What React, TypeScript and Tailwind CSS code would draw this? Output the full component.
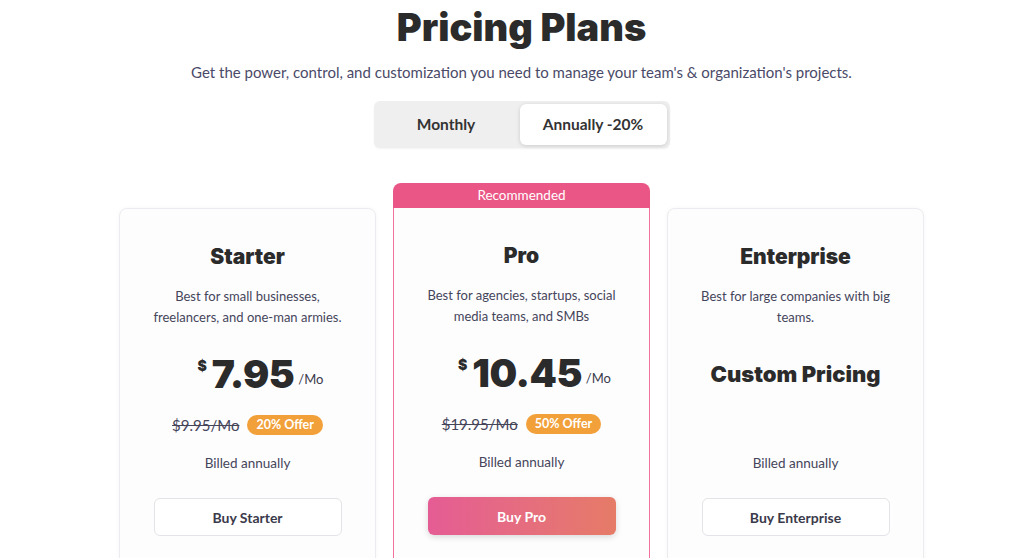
import { useState } from "react";

type Plan = {
  name: string;
  desc: string;
  price?: string;
  oldPrice?: string;
  offer?: string;
  cta: string;
  featured?: boolean;
};

const plans: Plan[] = [
  {
    name: "Starter",
    desc: "Best for small businesses, freelancers, and one-man armies.",
    price: "7.95",
    oldPrice: "$9.95/Mo",
    offer: "20% Offer",
    cta: "Buy Starter",
  },
  {
    name: "Pro",
    desc: "Best for agencies, startups, social media teams, and SMBs",
    price: "10.45",
    oldPrice: "$19.95/Mo",
    offer: "50% Offer",
    cta: "Buy Pro",
    featured: true,
  },
  {
    name: "Enterprise",
    desc: "Best for large companies with big teams.",
    cta: "Buy Enterprise",
  },
];

const heading = "font-['Inter',sans-serif] font-black text-[#2b2b2b]";

const featuredBody = "border-x border-b border-[#f2719f]";
const plainBody = "border border-[#ececf0] rounded-t-lg shadow-[0_0_4px_rgba(0,0,0,0.04)]";

const PlanCard = ({ plan }: { plan: Plan }) => (
  <div className="w-[257px] flex flex-col">
    {plan.featured ? (
      <div className="h-[25px] rounded-t-lg bg-[#ea5685] text-white text-[13.5px] flex items-center justify-center">
        Recommended
      </div>
    ) : (
      <div className="h-[25px]" />
    )}
    <div
      className={`h-[400px] bg-[#fdfdfe] flex flex-col items-center px-6 pt-[33px] ${
        plan.featured ? featuredBody : plainBody
      }`}
    >
      <h2 className={`${heading} text-[21px] leading-[30px]`}>{plan.name}</h2>
      <p className="mt-[14px] text-[13px] leading-[21px] text-[#45455a] text-center h-[42px]">
        {plan.desc}
      </p>
      {plan.price ? (
        <div className="mt-[22px] ml-[26px] h-[50px] flex items-start">
          <span className={`${heading} text-[14px] mt-[5px] mr-[5px]`}>$</span>
          <span className={`${heading} text-[39px] leading-[48px] tracking-[-0.5px]`}>
            {plan.price}
          </span>
          <span className="text-[13px] text-[#3a3a4a] ml-[4px] mt-[20px]">/Mo</span>
        </div>
      ) : (
        <div className="mt-[22px] h-[50px] flex items-center pb-[2px]">
          <span className={`${heading} text-[22px]`}>Custom Pricing</span>
        </div>
      )}
      <div className="mt-[14px] h-[22px] flex items-center gap-2">
        {plan.oldPrice && (
          <>
            <span className="text-[15px] line-through text-[#45455a]">{plan.oldPrice}</span>
            <span className="rounded-full bg-[#f1a03a] text-white text-[12.5px] font-bold px-[9px] h-[20px] flex items-center">
              {plan.offer}
            </span>
          </>
        )}
      </div>
      <p className="mt-[17px] text-[13.5px] text-[#45455a]">Billed annually</p>
      <button
        className={
          "mt-[25px] w-[188px] h-[38px] rounded-md text-[14px] font-bold " +
          (plan.featured
            ? "bg-gradient-to-r from-[#e55c94] to-[#e67b67] text-white shadow-[0_2px_6px_rgba(0,0,0,0.15)]"
            : "border border-[#e3e3e8] text-[#3a3a4a] bg-white")
        }
      >
        {plan.cta}
      </button>
    </div>
  </div>
);

export default function App() {
  const [annual, setAnnual] = useState(true);

  return (
    <div className="w-[1024px] h-[558px] overflow-hidden bg-white font-['Lato',sans-serif] flex flex-col items-center pl-[19px]">
      <h1 className={`${heading} shrink-0 text-[38px] leading-[48px] mt-[3px]`}>Pricing Plans</h1>
      <p className="shrink-0 mt-[10px] text-[15px] leading-[22px] text-[#4a4a68]">
        Get the power, control, and customization you need to manage your team's &amp; organization's projects.
      </p>
      <div className="shrink-0 mt-[18px] w-[296px] h-[47px] rounded-md bg-[#efefef] flex items-center p-[3px] shadow-[0_1px_2px_rgba(0,0,0,0.05)]">
        <button
          onClick={() => setAnnual(false)}
          className={
            "flex-1 h-full rounded-md text-[15.5px] font-bold text-[#333] pr-[4px] " +
            (!annual ? "bg-white shadow-[0_1px_4px_rgba(0,0,0,0.15)]" : "")
          }
        >
          Monthly
        </button>
        <button
          onClick={() => setAnnual(true)}
          className={
            "w-[147px] h-full rounded-md text-[15.5px] font-bold text-[#333] " +
            (annual ? "bg-white shadow-[0_1px_4px_rgba(0,0,0,0.15)]" : "")
          }
        >
          Annually -20%
        </button>
      </div>
      <div className="shrink-0 mt-[35px] flex items-start gap-[17px]">
        {plans.map((p) => (
          <PlanCard key={p.name} plan={p} />
        ))}
      </div>
    </div>
  );
}
